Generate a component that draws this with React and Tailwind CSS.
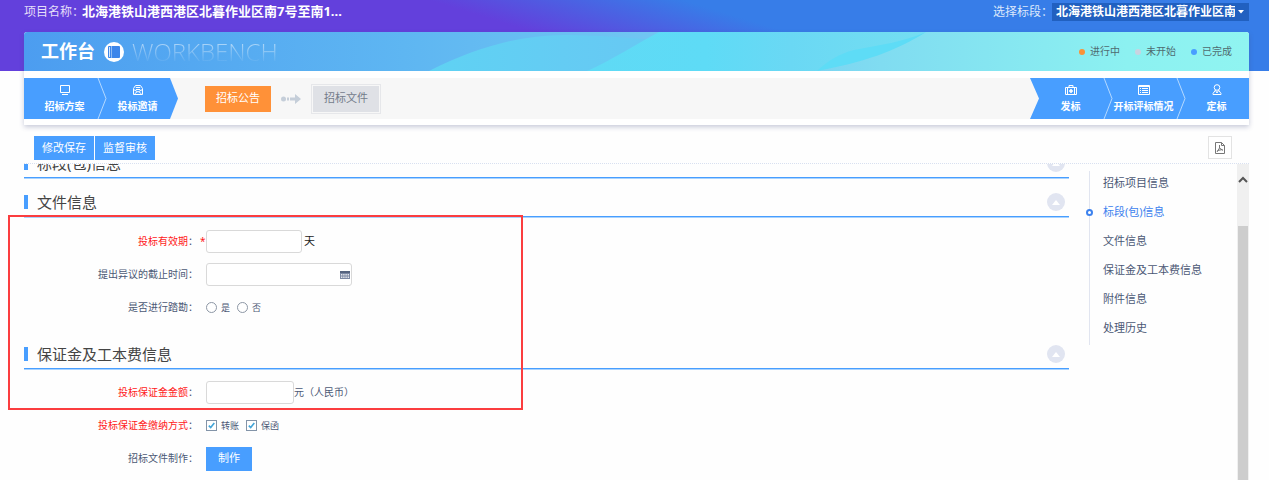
import React, { useState } from "react";

const ARROW_LINE = "M1 0 L9 20.5 L1 41";

const ICONS = {
  monitor: (
    <>
      <path d="M1.5 1.5h9v7h-9z" />
      <path d="M3 10.5h6" />
    </>
  ),
  invite: (
    <>
      <path d="M1.5 4.5 L3.5 1.5h5l2 3v6h-9z" />
      <path d="M1.5 5.5 6 8l4.5-2.5M3.8 3.5h4.4M2.5 10 5 7.8M9.5 10 7 7.8M3.8 5.5h4.4" />
    </>
  ),
  briefcase: (
    <>
      <path d="M0.5 3.5h11v7h-11zM4 3.5v-2h4v2M2.5 3.5v7M9.5 3.5v7" />
      <path d="M4 7h4M6 5v4" strokeWidth="1.6" />
    </>
  ),
  list: (
    <>
      <path d="M0.5 1.5h11v9h-11zM0.5 2.5h11" />
      <path d="M2 4.5h1M4 4.5h6M2 6.5h1M4 6.5h6M2 8.5h1M4 8.5h6" />
    </>
  ),
  person: (
    <>
      <circle cx="6" cy="3.5" r="2.8" />
      <path d="M4.5 6 2 9.5v1h8v-1L7.5 6M4.5 6.5 6 9l1.5-2.5" />
    </>
  ),
};

// One blue step in the process bar
const Step = ({ icon, label, divider }) => {
  return (
    <a href="#" className="relative flex w-[73px] flex-col items-center gap-[3px] pt-[6px] pl-2 text-white">
      <svg viewBox="0 0 12 12" className="size-3" fill="none" stroke="currentColor" strokeWidth="1">
        {ICONS[icon]}
      </svg>
      <span className="text-[10px] leading-[14px] font-bold whitespace-nowrap">{label}</span>
      {divider && (
        <svg viewBox="0 0 10 41" className="absolute top-0 -right-[10px] h-[41px] w-[10px]" fill="none" stroke="#b5d9ff">
          <path d={ARROW_LINE} />
        </svg>
      )}
    </a>
  );
};

const Legend = ({ dot, label }) => {
  return (
    <li className="flex items-center gap-[5px]">
      <span className={`size-[6px] rounded-full ${dot}`} />
      {label}
    </li>
  );
};

const SectionTitle = ({ title }) => {
  return (
    <div className="flex h-[39px] items-center border-b border-[#489eff] pt-[10px] pr-1 shadow-[0_1px_0_#a9d3ff]">
      <span className="h-[14px] w-1 bg-[#489eff]" />
      <h2 className="ml-[9px] flex-1 text-[15px] leading-5 text-[#444]">{title}</h2>
      <button type="button" aria-label={`收起${title}`} className="flex size-[18px] items-center justify-center rounded-full bg-[#e1e5f1]">
        <svg viewBox="0 0 10 6" className="h-[5px] w-2" fill="#fff">
          <path d="M5 0 10 6H0z" />
        </svg>
      </button>
    </div>
  );
};

// Form row: right aligned label, required mark, then the control
const Row = ({ label, htmlFor, red, required, children }) => {
  return (
    <div className="flex h-[33px] items-center text-[10px] text-[#4b5875]">
      <label htmlFor={htmlFor} className="w-[174px] text-right">
        <span className={red ? "text-[#ff1a1a]" : ""}>{label}</span>：
      </label>
      <span className="w-2 pl-[2px] text-[#ff1a1a]">{required && "*"}</span>
      {children}
    </div>
  );
};

const Radio = ({ label }) => {
  return (
    <label className="mr-[7px] flex items-center gap-1 text-[9px]">
      <input type="radio" name="survey" className="size-[11px] appearance-none rounded-full border border-[#8d97a5] bg-white checked:border-[3px] checked:border-[#489eff]" />
      {label}
    </label>
  );
};

const Check = ({ label }) => {
  const [checked, setChecked] = useState(true);
  return (
    <label className="relative mr-[7px] flex items-center gap-1 text-[9px]">
      <input
        type="checkbox"
        checked={checked}
        onChange={(e) => setChecked(e.target.checked)}
        className="size-[11px] appearance-none border border-[#8394a8] bg-white"
      />
      {checked && (
        <svg viewBox="0 0 11 11" className="pointer-events-none absolute left-0 size-[11px]" fill="none" stroke="#43a5d8" strokeWidth="1.6">
          <path d="M2.8 5.6 4.7 7.6 8.3 3" />
        </svg>
      )}
      {label}
    </label>
  );
};

const NAV_ITEMS = ["招标项目信息", "标段(包)信息", "文件信息", "保证金及工本费信息", "附件信息", "处理历史"];

const INPUT = "h-[23px] rounded-[3px] border border-[#d9d9d9] bg-white px-1 outline-none focus:border-[#489eff]";

const App = () => {
  const [active, setActive] = useState(1);

  return (
    <div className="relative flex h-screen flex-col overflow-hidden bg-[#fefefe] font-['Noto_Sans','Noto_Sans_CJK_SC',sans-serif]">
      <header className="bg-[linear-gradient(17deg,#6340dc_44%,#377de8_61%)] bg-[length:100%_71px] bg-no-repeat pr-5 pl-6">
        <div className="flex h-8 items-start justify-between text-[12px] text-white">
          <div className="flex h-[23px] items-center">
            <span className="w-[58px] whitespace-nowrap text-[#e4def9]">项目名称：</span>
            <h1 className="text-[13px] font-bold">北海港铁山港西港区北暮作业区南7号至南1...</h1>
          </div>
          <div className="flex h-[23px] items-center">
            <label htmlFor="lot" className="w-[59px] whitespace-nowrap text-[#dce8fb]">选择标段：</label>
            <div className="relative flex items-center">
              <select id="lot" className="h-[18px] w-[197px] appearance-none bg-[#2160c0] pr-[14px] pl-1 leading-[18px] font-bold outline-none">
                <option>北海港铁山港西港区北暮作业区南7号至南10号泊位工程</option>
              </select>
              <svg viewBox="0 0 6 4" className="pointer-events-none absolute right-[5px] h-1 w-[6px]" fill="#fff">
                <path d="M0 0h6L3 3.5z" />
              </svg>
            </div>
          </div>
        </div>

        <div className="rounded-t-[3px] bg-white pb-[6px] shadow-[0_2px_5px_rgba(70,80,130,0.3)]">
          <div className="relative h-[39px] overflow-hidden rounded-t-[3px]">
            <svg viewBox="0 0 1225 39" preserveAspectRatio="none" className="absolute inset-0 h-full w-full">
              <defs>
                <linearGradient id="base">
                  <stop offset="0" stopColor="#4c9df0" />
                  <stop offset="0.31" stopColor="#5eb6f2" />
                  <stop offset="0.55" stopColor="#74c8f2" />
                  <stop offset="0.7" stopColor="#80dcf1" />
                  <stop offset="0.9" stopColor="#8cf1f1" />
                  <stop offset="1" stopColor="#90f4f1" />
                </linearGradient>
                <linearGradient id="wave1">
                  <stop offset="0" stopColor="#5fd2f3" />
                  <stop offset="1" stopColor="#68c7f3" />
                </linearGradient>
                <linearGradient id="wave2">
                  <stop offset="0" stopColor="#5fdaf5" />
                  <stop offset="0.35" stopColor="#5edbf6" />
                  <stop offset="0.6" stopColor="#6ad8f4" />
                  <stop offset="1" stopColor="#74def1" />
                </linearGradient>
              </defs>
              <rect width="1225" height="39" fill="url(#base)" />
              <path d="M405 39C455 14 500 2 545 3C590 4 620 7 650 10V39z" fill="url(#wave1)" />
              <path d="M563 39C590 27 610 13 635 0H902C875 17 840 28 793 39z" fill="url(#wave2)" />
              <path d="M793 39C805 28 815 22 830 18C855 13 880 10 902 0C870 20 840 30 793 39z" fill="#5edcf6" />
            </svg>
            <div className="relative flex h-full items-center pr-[17px] pl-[17px]">
              <h2 className="text-[18px] font-bold text-white">工作台</h2>
              <svg viewBox="0 0 20 20" className="ml-[9px] size-5">
                <circle cx="10" cy="10" r="10" fill="#fff" />
                <rect x="4" y="4" width="12" height="12" rx="1" fill="#3d86ea" />
                <path d="M5.5 5v10" stroke="#d5e6fb" strokeWidth="1" />
                <path d="M7.5 4v12" stroke="#8fbcf4" strokeWidth="1" />
              </svg>
              <span className="ml-2 bg-linear-to-b from-white/50 from-25% to-white/5 to-80% bg-clip-text font-['Open_Sans'] text-[24px] leading-8 font-light text-transparent">
                WORKBENCH
              </span>
              <ul className="ml-auto flex gap-[15px] text-[10px] text-[#4f6b70]">
                <Legend dot="bg-[#fb9236]" label="进行中" />
                <Legend dot="bg-[#c9d3e0]" label="未开始" />
                <Legend dot="bg-[#489eff]" label="已完成" />
              </ul>
            </div>
          </div>

          <nav className="mt-[7px] flex h-[41px] bg-[#f7f7f7]">
            <div className="flex bg-[#489eff] pr-2 [clip-path:polygon(0_0,calc(100%_-_8px)_0,100%_50%,calc(100%_-_8px)_100%,0_100%)]">
              <Step icon="monitor" label="招标方案" divider />
              <Step icon="invite" label="投标邀请" />
            </div>
            <div className="ml-[27px] flex items-center text-[11px]">
              <button type="button" className="h-[26px] w-[66px] bg-[#ff9138] text-white">招标公告</button>
              <svg viewBox="0 0 20 10" className="mx-[10px] h-[10px] w-5" fill="#c5ced9">
                <circle cx="2.5" cy="5" r="2.5" />
                <path d="M6 3.5h2v3H6zM9 3.5h5V0l6 5-6 5V6.5H9z" />
              </svg>
              <button type="button" className="h-[30px] w-[70px] border border-[#e6e7ea] bg-[#dfe1e6] text-[#747c8b] shadow-[inset_0_0_0_1px_#f7f7f7]">招标文件</button>
            </div>
            <div className="ml-auto flex bg-[#489eff] [clip-path:polygon(0_0,100%_0,100%_100%,0_100%,9px_50%)]">
              <Step icon="briefcase" label="发标" divider />
              <Step icon="list" label="开标评标情况" divider />
              <Step icon="person" label="定标" />
            </div>
          </nav>
        </div>
      </header>

      <div className="mr-5 ml-6 flex h-[39px] shrink-0 items-start border-b border-dotted border-[#d8e0f0] pt-[11px] pr-[17px] pl-[10px]">
        <div className="flex gap-px text-[11px] text-white">
          <button type="button" className="h-6 w-[60px] bg-[#489eff]">修改保存</button>
          <button type="button" className="h-6 w-[60px] bg-[#489eff]">监督审核</button>
        </div>
        <button type="button" aria-label="导出PDF" className="ml-auto flex h-[23px] w-6 items-center justify-center border border-[#e3e3e3] bg-white">
          <svg viewBox="0 0 12 14" className="h-[14px] w-3" fill="none" stroke="#777">
            <path d="M1.5 1.5h6l3 3v8h-9zM7.5 1.5v3h3" />
            <path d="M5.5 4v3L3 11M5.5 7 9 9.5M3.5 9.5 8.5 8.5" />
          </svg>
        </button>
      </div>

      <main className="mr-5 ml-6 flex min-h-0 flex-1 overflow-hidden">
        <form className="-mt-[25px] flex-1">
          <SectionTitle title="标段(包)信息" />

          <SectionTitle title="文件信息" />
          <div className="pt-2 pb-[6px]">
            <Row label="投标有效期" htmlFor="validity" red required>
              <input id="validity" type="text" className={`w-24 ${INPUT}`} />
              <span className="ml-[2px] text-[11px] text-[#222]">天</span>
            </Row>
            <Row label="提出异议的截止时间" htmlFor="deadline">
              <div className="relative flex items-center">
                <input id="deadline" type="text" className={`w-[146px] ${INPUT}`} />
                <svg viewBox="0 0 10 8" className="pointer-events-none absolute right-[2px] h-2 w-[10px]">
                  <rect width="10" height="8" fill="#7c88a3" />
                  <path d="M0 0h10v2H0z" fill="#55637f" />
                  <path d="M1 3.5h8M1 5h8M1 6.5h8" stroke="#fff" strokeWidth="0.8" strokeDasharray="1.4 0.8" />
                </svg>
              </div>
            </Row>
            <Row label="是否进行踏勘">
              <Radio label="是" />
              <Radio label="否" />
            </Row>
          </div>

          <SectionTitle title="保证金及工本费信息" />
          <div className="pt-[7px]">
            <Row label="投标保证金金额" htmlFor="deposit" red>
              <input id="deposit" type="text" className={`w-[88px] ${INPUT}`} />
              <span>元（人民币）</span>
            </Row>
            <Row label="投标保证金缴纳方式" red>
              <Check label="转账" />
              <Check label="保函" />
            </Row>
            <Row label="招标文件制作" htmlFor="make">
              <button id="make" type="button" className="h-6 w-[46px] bg-[#489eff] text-[11px] text-white">制作</button>
            </Row>
          </div>
        </form>

        <ul className="mt-[7px] ml-5 w-[148px] self-start border-l border-[#e1e5f0] text-[11px] text-[#4b5875]">
          {NAV_ITEMS.map((item, i) => (
            <li key={item} className="relative flex h-[29px] items-start pl-[13px]">
              {active === i && <span className="absolute top-[9px] -left-1 size-[7px] rounded-full border-2 border-[#3d82ee] bg-white" />}
              <a href="#" onClick={() => setActive(i)} className={`leading-[23px] ${active === i ? "text-[#3d82ee]" : ""}`}>
                {item}
              </a>
            </li>
          ))}
        </ul>

        <div className="flex w-3 flex-col bg-[#f0f0f0]">
          <div className="flex h-[62px] justify-center pt-3">
            <svg viewBox="0 0 10 7" className="h-[7px] w-[10px]" fill="none" stroke="#555" strokeWidth="2">
              <path d="M1 6 5 2l4 4" />
            </svg>
          </div>
          <div className="mx-px flex-1 bg-[#cdcdcd]" />
        </div>
      </main>

      {/* highlighted area */}
      <div className="pointer-events-none absolute top-[215px] left-2 h-[195px] w-[515px] border-2 border-[#fb3d3f]" />
    </div>
  );
};

export default App;
